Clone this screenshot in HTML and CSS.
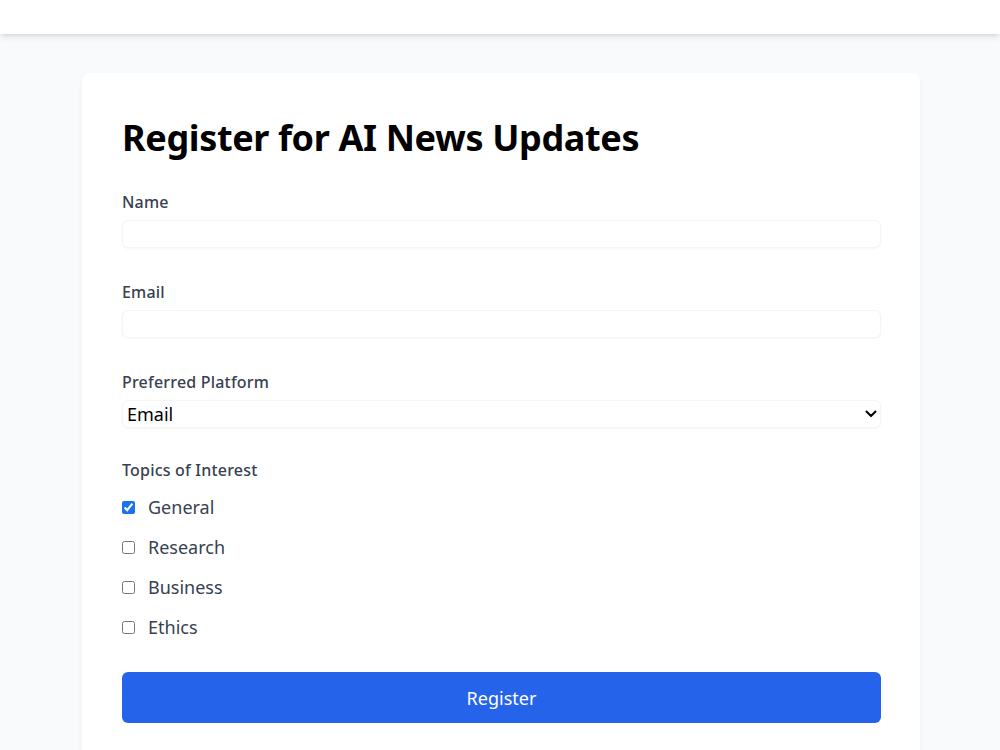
FILE: index.html
```html
<!DOCTYPE html>
<html lang="en">
<head>
<meta charset="utf-8">
<title>Register for AI News Updates</title>
<link rel="stylesheet" href="styles.css">
</head>
<body>
<header class="topbar"></header>
<main class="page">
  <section class="card">
    <h1 class="title">Register for AI News Updates</h1>
    <form class="form">
      <div class="field">
        <label class="label" for="name">Name</label>
        <input class="input" id="name" type="text">
      </div>
      <div class="field">
        <label class="label" for="email">Email</label>
        <input class="input" id="email" type="email">
      </div>
      <div class="field">
        <label class="label" for="platform">Preferred Platform</label>
        <div class="select-wrap">
          <select class="select" id="platform">
            <option>Email</option>
            <option>Slack</option>
            <option>Telegram</option>
          </select>
          <svg class="chevron" width="12" height="8" viewBox="0 0 12 8" aria-hidden="true"><path d="M1.5 1.5 L6 6 L10.5 1.5" fill="none" stroke="#000" stroke-width="2" stroke-linecap="round" stroke-linejoin="round"/></svg>
        </div>
      </div>
      <div class="field topics">
        <span class="label">Topics of Interest</span>
        <div class="checks">
          <label class="check"><input type="checkbox" checked><span>General</span></label>
          <label class="check"><input type="checkbox"><span>Research</span></label>
          <label class="check"><input type="checkbox"><span>Business</span></label>
          <label class="check"><input type="checkbox"><span>Ethics</span></label>
        </div>
      </div>
      <button class="btn" type="button">Register</button>
    </form>
  </section>
</main>
</body>
</html>
```

FILE: styles.css
```css
* { box-sizing: border-box; }
html, body { margin: 0; padding: 0; }
body {
  background: #f9fafb;
  font-family: "Noto Sans", "Open Sans", sans-serif;
  color: #111827;
}
.topbar {
  height: 34px;
  background: #ffffff;
  box-shadow: 0 4px 6px -1px rgba(0,0,0,0.1), 0 2px 4px -2px rgba(0,0,0,0.1);
  position: relative;
  z-index: 1;
}
.page {
  padding-top: 39px;
  padding-left: 2px;
}
.card {
  width: 838px;
  margin: 0 auto;
  background: #ffffff;
  border-radius: 8px;
  box-shadow: 0 4px 6px -1px rgba(0,0,0,0.06), 0 2px 4px -2px rgba(0,0,0,0.05);
  padding: 40px;
  min-height: 700px;
}
.title {
  margin: 0;
  padding-top: 5px;
  font-size: 36px;
  line-height: 40px;
  font-weight: 700;
  letter-spacing: -0.36px;
  color: #000;
}
.form {
  display: flex;
  flex-direction: column;
  margin-top: 32px;
}
.field {
  display: flex;
  flex-direction: column;
  margin-bottom: 32px;
}
.label {
  font-size: 16px;
  line-height: 24px;
  font-weight: 500;
  letter-spacing: 0.2px;
  color: #374151;
  margin-bottom: 6px;
}
.input, .select {
  width: 759px;
  height: 28px;
  border: 1px solid #f4f5f6;
  border-radius: 6px;
  box-shadow: 0 1px 2px rgba(0,0,0,0.035);
  background: #fff;
  font-family: inherit;
  font-size: 16px;
  outline: none;
  margin: 0;
}
.select-wrap {
  position: relative;
  width: 759px;
}
.select {
  appearance: none;
  -webkit-appearance: none;
  padding: 0 0 0 4px;
  font-size: 18px;
  color: #000;
}
.chevron {
  position: absolute;
  right: 4px;
  top: 10px;
  pointer-events: none;
}
.topics {
  margin-top: -2px;
  margin-bottom: 0;
}
.topics .label {
  margin-bottom: 11px;
}
.checks {
  display: flex;
  flex-direction: column;
  gap: 12px;
}
.check {
  display: flex;
  align-items: center;
  gap: 13px;
  height: 28px;
  font-size: 18px;
  color: #374151;
}
.check input {
  width: 13px;
  height: 13px;
  margin: 0;
  accent-color: #1a73e8;
}
.btn {
  margin-top: 31px;
  height: 51px;
  width: 759px;
  border: none;
  border-radius: 6px;
  background: #2563eb;
  color: #fff;
  font-family: inherit;
  font-size: 18px;
}
```
